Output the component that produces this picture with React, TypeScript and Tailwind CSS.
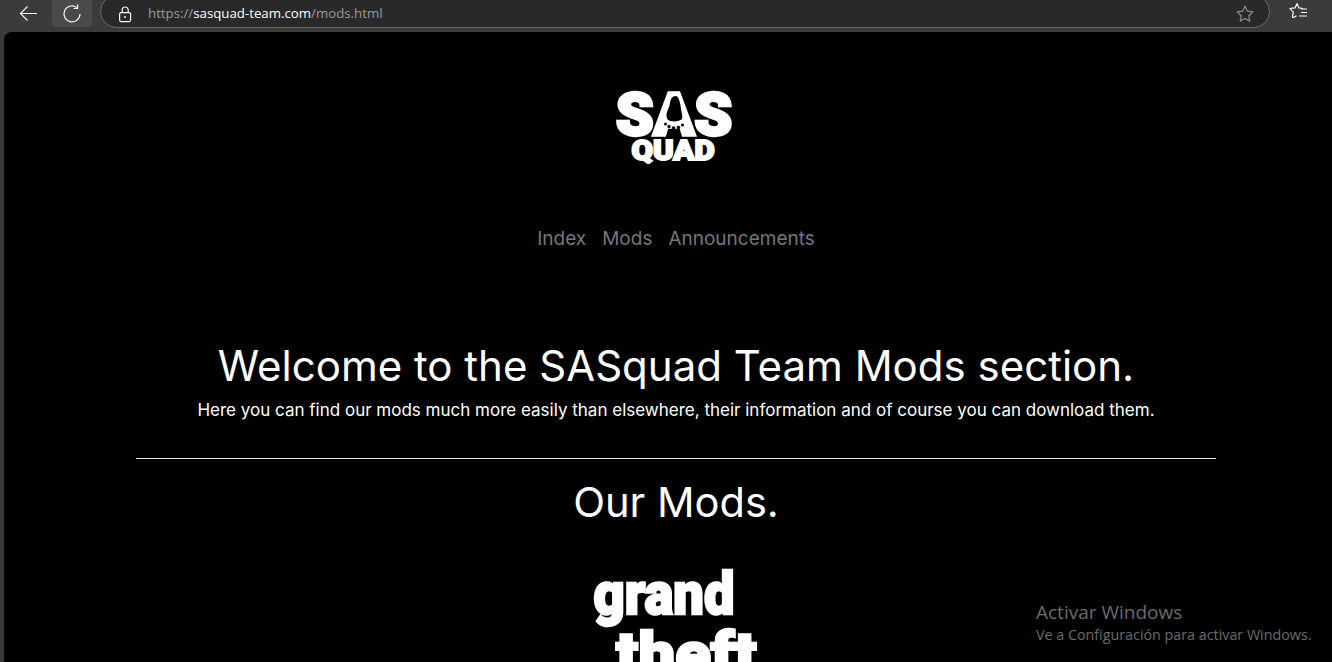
import React from "react";

const mont = { fontFamily: '"Inter", "Noto Sans", sans-serif' };

function Back() {
  return (
    <svg width="20" height="20" viewBox="0 0 20 20" fill="none" stroke="#f2f2f2" strokeWidth="1.2">
      <path d="M19 10.5H2.5M9.5 3.5l-7 7 7 7" />
    </svg>
  );
}
function Reload() {
  return (
    <svg width="20" height="20" viewBox="0 0 20 20" fill="none" stroke="#f2f2f2" strokeWidth="1.2">
      <path d="M15 3.6A8 8 0 1 0 18 10" />
      <path d="M15.6 0.5v4h-4" />
    </svg>
  );
}
function Lock() {
  return (
    <svg width="14" height="17" viewBox="0 0 14 17" fill="none" stroke="#f5f5f5" strokeWidth="1.2">
      <rect x="1.6" y="6.6" width="11" height="9" rx="1.5" />
      <path d="M4.2 6.5V4a3 3 0 0 1 6 0v2.5" />
      <circle cx="7" cy="11" r="1" fill="#f5f5f5" stroke="none" />
    </svg>
  );
}
function Star() {
  return (
    <svg width="18" height="18" viewBox="0 0 18 18" fill="none" stroke="#8c8c8c" strokeWidth="1.2" strokeLinejoin="round">
      <path d="M9 1.2l2.4 5 5.4.7-4 3.8 1 5.4L9 13.5l-4.8 2.6 1-5.4-4-3.8 5.4-.7z" />
    </svg>
  );
}
function Favs() {
  return (
    <svg width="20" height="20" viewBox="0 0 20 20" fill="none" stroke="#f5f5f5" strokeWidth="1.2" strokeLinejoin="round">
      <path d="M8 1.5l2 4.4 4 .6M3.5 6.2l-2.6.5 3.4 3.4-.9 5 1 .4 3-1.6M3.5 6.2l2.6-.3L8 1.5" />
      <path d="M12 7h6M12 10.5h6M10 14h8" />
    </svg>
  );
}

function SasLogo() {
  const f = { fontFamily: 'Roboto, "DejaVu Sans", sans-serif', fontWeight: 900 };
  return (
    <svg width="122" height="76" viewBox="0 0 122 76" className="block">
      <text x="3" y="46.5" fill="#fff" stroke="#fff" strokeWidth="3.4" strokeLinejoin="miter" textLength="116" lengthAdjust="spacingAndGlyphs" fontSize="59" style={f}>
        SAS
      </text>
      <path d="M62.500 8c-3 0-5 3-5.500 7-.5 4-2 6-3 9-1 3-.5 6 1 8 3 2 11 2 14-1 1-3-.5-6-1-10-.5-5-2-13-5.500-13z" fill="#000" />
      <path d="M62.500 44l-7.500 5.500v2h15v-2z" fill="#000" />
      <g fill="#000">
        <circle cx="52.500" cy="36" r="1.500" />
        <circle cx="56" cy="38.500" r="1.700" />
        <circle cx="60.500" cy="40" r="1.800" />
        <circle cx="65.500" cy="39.500" r="1.800" />
        <circle cx="69.500" cy="37" r="1.600" />
      </g>
      <text x="18.500" y="71.500" fill="#fff" stroke="#fff" strokeWidth="2" textLength="83" lengthAdjust="spacingAndGlyphs" fontSize="28" style={f}>
        QUAD
      </text>
    </svg>
  );
}

function GtaLogo() {
  const f = { fontFamily: 'Roboto, "DejaVu Sans", sans-serif', fontWeight: 900 };
  return (
    <svg width="170" height="122" viewBox="0 0 170 122" className="block">
      <text x="2.500" y="53" fill="#fff" stroke="#fff" strokeWidth="2.500" strokeLinejoin="miter" textLength="141" lengthAdjust="spacingAndGlyphs" fontSize="60" style={f}>
        grand
      </text>
      <text x="25" y="113" fill="#fff" stroke="#fff" strokeWidth="2.500" strokeLinejoin="miter" textLength="141" lengthAdjust="spacingAndGlyphs" fontSize="60" style={f}>
        theft
      </text>
    </svg>
  );
}

export default function App() {
  return (
    <div className="h-[662px] w-[1332px] overflow-hidden bg-[#3b3b3b]">
      <div className="flex h-8 items-start">
        <div className="flex h-[26px] w-[52px] shrink-0 items-center justify-center pl-1">
          <Back />
        </div>
        <div className="flex h-[27px] w-10 shrink-0 items-center justify-center rounded-b bg-[#4a4a4a]">
          <Reload />
        </div>
        <div className="ml-2 -mt-[5px] flex h-[33px] w-[1170px] shrink-0 items-center rounded-[17px] border border-[#6b6b6b] bg-[#292929] pl-[17px] pt-[5px]">
          <Lock />
          <div className="ml-[16px] text-[13.25px] text-[#9a9a9a]" style={{ fontFamily: '"Open Sans", sans-serif' }}>
            https://<span className="text-white">sasquad-team.com</span>/mods.html
          </div>
          <div className="ml-auto mr-[15px] flex">
            <Star />
          </div>
        </div>
        <div className="ml-[19px] mt-[2px] flex shrink-0">
          <Favs />
        </div>
      </div>

      <div className="relative ml-1 h-[630px] w-[1344px] rounded-tl-lg bg-black text-white" style={mont}>
        <div className="flex flex-col items-center">
          <div className="mt-[56px] -ml-1 flex justify-center">
            <SasLogo />
          </div>
          <nav className="mt-[63px] flex gap-4 text-[19px] leading-6 text-[#77757c]">
            <span>Index</span>
            <span>Mods</span>
            <span>Announcements</span>
          </nav>
          <h1 className="mt-[87px] text-[42px] leading-[56px] font-normal text-white">Welcome to the SASquad Team Mods section.</h1>
          <p className="mt-[4px] text-[17px] leading-6 text-white">
            Here you can find our mods much more easily than elsewhere, their information and of course you can download them.
          </p>
          <div className="mt-[36px] h-px w-[1080px] bg-[#e5e5e5]" />
          <h2 className="mt-[15px] text-[41.600px] leading-[56px] font-normal text-white">Our Mods.</h2>
          <div className="mt-[31px]">
            <GtaLogo />
          </div>
        </div>
      </div>

      <div className="absolute left-[1036px] top-[600px] text-[#6b6b6b]" style={{ fontFamily: '"Open Sans", sans-serif' }}>
        <div className="text-[19px] leading-[25px]">Activar Windows</div>
        <div className="text-[14.300px] leading-[20px]">Ve a Configuración para activar Windows.</div>
      </div>
    </div>
  );
}
